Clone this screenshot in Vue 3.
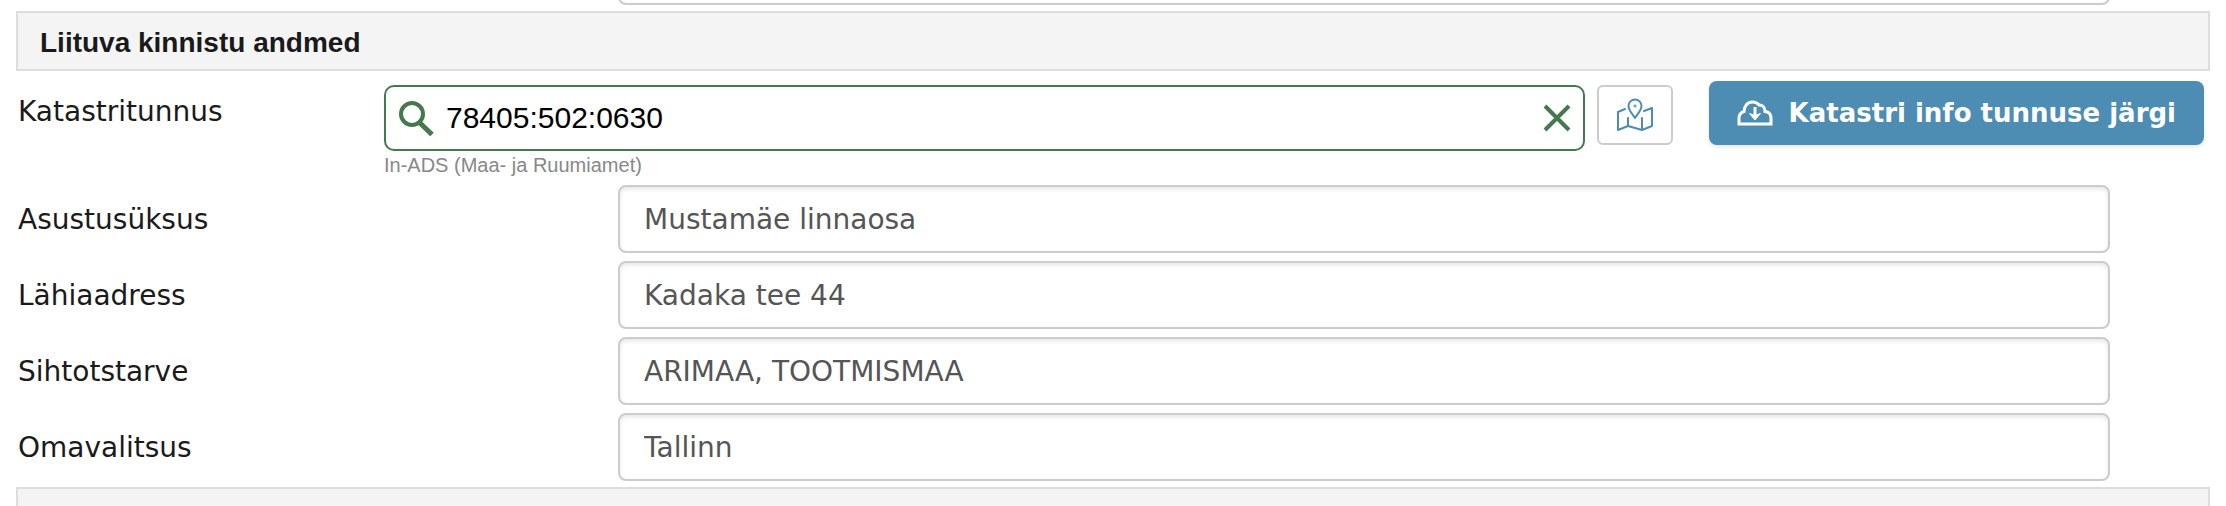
<script setup>
import { ref } from 'vue'

const cadastre = ref('78405:502:0630')

const fields = ref([
  { id: 'asustus', label: 'Asustusüksus', value: 'Mustamäe linnaosa' },
  { id: 'lahiaadress', label: 'Lähiaadress', value: 'Kadaka tee 44' },
  { id: 'sihtotstarve', label: 'Sihtotstarve', value: 'ARIMAA, TOOTMISMAA' },
  { id: 'omavalitsus', label: 'Omavalitsus', value: 'Tallinn' }
])

const clearSearch = () => {
  cadastre.value = ''
}
</script>

<template>
  <form class="page" @submit.prevent>
    <div class="row row-cut">
      <span></span>
      <input class="text-input" type="text">
    </div>

    <h2 class="section">Liituva kinnistu andmed</h2>

    <div class="search-row">
      <label class="label" for="cadastre">Katastritunnus</label>
      <div class="search">
        <div class="search-box">
          <svg class="icon-search" viewBox="0 0 36 36">
            <circle cx="14" cy="14" r="11" fill="none" stroke="currentColor" stroke-width="4" />
            <path d="M22 23L34 34.500" fill="none" stroke="currentColor" stroke-width="5" />
          </svg>
          <input id="cadastre" v-model="cadastre" type="text">
          <button class="btn-clear" type="button" @click="clearSearch">
            <svg viewBox="0 0 28 28">
              <path d="M2 2L26 26M26 2L2 26" fill="none" stroke="currentColor" stroke-width="4" />
            </svg>
          </button>
        </div>
        <small>In-ADS (Maa- ja Ruumiamet)</small>
      </div>
      <button class="btn-map" type="button">
        <svg viewBox="0 0 38 34" fill="none" stroke="currentColor" stroke-width="2" stroke-linejoin="round" stroke-linecap="round">
          <path d="M9 11L2 14V32L12 28L26 32L36 28V10L28 13" />
          <path d="M12 20V28M26 20V32" />
          <path d="M19 20C16 15.500 12.500 12 12.500 8A6.500 6.500 0 0 1 25.500 8C25.500 12 22 15.500 19 20Z" />
          <circle cx="19" cy="8" r="0.500" />
        </svg>
      </button>
      <button class="btn-primary" type="button">
        <svg viewBox="0 0 36 26" fill="none" stroke="currentColor" stroke-width="3">
          <path d="M2 24V18C2 14.500 4 12.500 7 11.500C7 6 10.500 2 15.500 2C18.500 2 20.500 3 22 5C26 5 28 8 28 11.500C32 12 34 14.500 34 18V24Z" />
          <path d="M18 7V16" />
          <path d="M12.500 13.500L16.500 15H19.500L23.500 13.500L18 20Z" fill="currentColor" stroke-width="1" />
        </svg>
        <span>Katastri info tunnuse järgi</span>
      </button>
    </div>

    <div v-for="field in fields" :key="field.id" class="row">
      <label class="label" :for="field.id">{{ field.label }}</label>
      <input :id="field.id" v-model="field.value" class="text-input" type="text">
    </div>

    <div class="section section-next"></div>
  </form>
</template>

<style>
body {
  margin: 0;
  background: #fff;
}
</style>

<style scoped>
.page {
  height: 100vh;
  overflow: hidden;
  box-sizing: border-box;
  padding: 0 16px;
  font-family: Verdana, "DejaVu Sans", sans-serif;
  font-size: 28px;
  color: #1a1a1a;
}

.section {
  box-sizing: border-box;
  height: 60px;
  margin: 6px 0 10px;
  padding: 2px 22px 0;
  border: 2px solid #ddd;
  background: #f4f4f4;
  font: bold 28px/56px "Helvetica Neue", Helvetica, "Liberation Sans", sans-serif;
}

.section-next { margin: 6px 0 0; }

.row {
  display: grid;
  grid-template-columns: 602px 1fr;
  align-items: center;
  margin-bottom: 8px;
  padding-right: 100px;
}

.row:nth-last-child(2) { margin-bottom: 0; }

.row-cut {
  height: 5px;
  margin-bottom: 0;
  align-items: end;
  align-content: end;
  overflow: hidden;
}

.label {
  padding: 2px 0 0 2px;
  line-height: 32px;
}

.text-input {
  box-sizing: border-box;
  width: 100%;
  height: 68px;
  padding: 0 24px;
  border: 2px solid #ccc;
  border-radius: 8px;
  box-shadow: inset 0 2px 4px rgba(0, 0, 0, 0.1);
  background: #fff;
  color: #555;
  font: inherit;
}

.search-row {
  display: grid;
  grid-template-columns: 366px 1fr 88px auto;
  align-items: start;
  height: 104px;
  padding-right: 6px;
}

.search-row .label { padding-top: 15px; }

.search {
  margin-top: 4px;
  margin-left: 2px;
}

.search-box {
  box-sizing: border-box;
  display: flex;
  align-items: center;
  height: 66px;
  padding: 0 12px;
  border: 2px solid #46784f;
  border-radius: 10px;
  color: #46784f;
}

.search-box input {
  flex: 1;
  min-width: 0;
  padding: 0 12px;
  border: none;
  outline: none;
  background: none;
  color: #000;
  font: 30px "Helvetica Neue", Helvetica, "Liberation Sans", sans-serif;
}

.icon-search {
  width: 36px;
  height: 36px;
}

.search small {
  display: block;
  margin-top: 2px;
  color: #888;
  font: 20px/24px "Helvetica Neue", Helvetica, "Liberation Sans", sans-serif;
}

button {
  cursor: pointer;
}

.btn-clear {
  display: flex;
  padding: 0;
  border: none;
  background: none;
  color: inherit;
}

.btn-clear svg {
  width: 28px;
  height: 28px;
}

.btn-map {
  box-sizing: border-box;
  display: flex;
  align-items: center;
  justify-content: center;
  height: 60px;
  margin: 4px 0 0 12px;
  border: 2px solid #ccc;
  border-radius: 6px;
  background: #fff;
  color: #4d8db3;
}

.btn-map svg {
  flex: none;
  width: 38px;
  height: 34px;
}

.btn-primary {
  display: flex;
  align-items: center;
  gap: 16px;
  height: 64px;
  margin-left: 36px;
  padding: 0 28px;
  border: none;
  border-radius: 8px;
  box-shadow: 0 2px 4px rgba(0, 0, 0, 0.1);
  background: #4d8db3;
  color: #fff;
  font: bold 26px Verdana, "DejaVu Sans", sans-serif;
  white-space: nowrap;
}

.btn-primary svg {
  width: 36px;
  height: 26px;
}
</style>
